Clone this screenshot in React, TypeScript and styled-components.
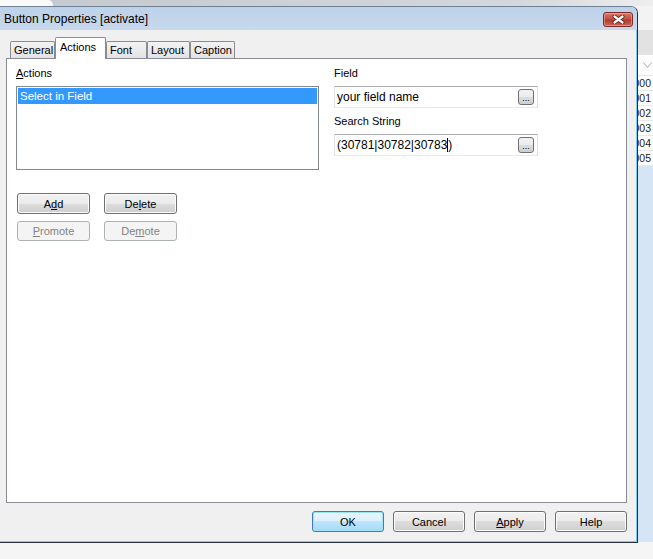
import styled, { createGlobalStyle } from 'styled-components';

const GlobalStyle = createGlobalStyle`
  html, body {
    margin: 0;
    padding: 0;
  }
  body {
    font-family: "Liberation Sans", Arial, sans-serif;
    font-size: 11px;
    color: #000;
    background: #f5f5f5;
  }
`;

const Desktop = styled.div`
  position: relative;
  width: 653px;
  height: 559px;
  overflow: hidden;
`;

/* the application window behind the dialog */
const BgApp = styled.div`
  display: flex;
  flex-direction: column;
  height: 100%;
`;

const TopStrip = styled.div`
  display: flex;
  height: 6px;
  background: linear-gradient(to right, #c3c8ce, #d4d8dc 80%, #eeeeee);
`;

const TopTab = styled.div`
  width: 53px;
  background: #fafafa;
  border-top-right-radius: 5px;
`;

const Toolbar = styled.div<{ $h: number; $bg: string }>`
  height: ${(p) => p.$h}px;
  background: ${(p) => p.$bg};
`;

const GridHeader = styled.div`
  display: flex;
  justify-content: flex-end;
  align-items: center;
  height: 21px;
  box-sizing: border-box;
  padding-right: 1px;
  background: #fdfdfd;
  border-bottom: 1px solid #e6e6e6;
`;

const GridRow = styled.div`
  display: flex;
  justify-content: flex-end;
  align-items: center;
  height: 15px;
  box-sizing: border-box;
  padding-right: 2px;
  background: #fff;
  border-bottom: 1px solid #e8e8e8;
  font-size: 10.5px;
  color: #222;
`;

const BlueArea = styled.div`
  flex: 1;
  background: #d6e5f5;
`;

const StatusBar = styled.div`
  height: 17px;
  background: #f5f5f5;
`;

/* dialog window */
const Dialog = styled.section`
  position: absolute;
  left: 0;
  top: 6px;
  width: 638px;
  height: 537px;
  box-sizing: border-box;
  display: flex;
  flex-direction: column;
  border: 1px solid #26323f;
  border-left: none;
  border-top-color: #6f8195;
  border-top-right-radius: 7px;
  background: #f0f0f0;
  box-shadow: inset -1px -1px 0 #84c8ea;
  overflow: hidden;
`;

const TitleBar = styled.header`
  display: flex;
  justify-content: space-between;
  align-items: flex-start;
  height: 23px;
  padding: 0 4px;
  background: linear-gradient(#bdd1e9, #c8d9ee);
`;

const Title = styled.h1`
  margin: 5px 0 0;
  font-size: 12px;
  font-weight: normal;
  line-height: 14px;
  color: #000;
`;

const CloseButton = styled.button`
  display: flex;
  align-items: center;
  justify-content: center;
  margin-top: 5px;
  width: 30px;
  height: 15px;
  padding: 0;
  border: 1px solid #7a2c25;
  border-radius: 3px;
  background: linear-gradient(#d77a6e, #c24f42 45%, #b23a2e 55%, #c9685a);
  box-shadow: inset 0 0 0 1px rgba(255, 200, 190, 0.45);
`;

const Body = styled.div`
  flex: 1;
  display: flex;
  flex-direction: column;
  padding: 7px 10px 0 6px;
`;

const TabStrip = styled.div`
  display: flex;
  align-items: flex-end;
  height: 22px;
  padding-left: 4px;
  position: relative;
  z-index: 1;
`;

const Tab = styled.div<{ $w: number; $active?: boolean }>`
  box-sizing: border-box;
  width: ${(p) => p.$w}px;
  height: ${(p) => (p.$active ? 22 : 17)}px;
  margin-bottom: ${(p) => (p.$active ? 0 : 1)}px;
  padding: ${(p) => (p.$active ? '3px 0 0 4px' : '2px 0 0 3px')};
  border: 1px solid #898c95;
  border-bottom: none;
  border-radius: 2px 2px 0 0;
  background: ${(p) => (p.$active ? '#fff' : 'linear-gradient(#f3f3f3, #e3e3e3)')};
  font-size: 11px;
  line-height: 13px;
  white-space: nowrap;
`;

const Panel = styled.div`
  flex: 1;
  margin-top: -1px;
  box-sizing: border-box;
  display: flex;
  align-items: flex-start;
  gap: 15px;
  padding: 8px 9px;
  border: 1px solid #898c95;
  background: #fff;
`;

const Column = styled.div<{ $w: number }>`
  display: flex;
  flex-direction: column;
  width: ${(p) => p.$w}px;
`;

const Label = styled.label`
  font-size: 11px;
  line-height: 13px;
  margin-bottom: 6px;
`;

const ListBox = styled.div`
  box-sizing: border-box;
  height: 84px;
  padding: 1px;
  border: 1px solid #828790;
  background: #fff;
`;

const ListItem = styled.div<{ $selected?: boolean }>`
  height: 16px;
  padding-left: 2px;
  font-size: 11.5px;
  line-height: 16px;
  color: ${(p) => (p.$selected ? '#fff' : '#000')};
  background: ${(p) => (p.$selected ? '#3399ff' : 'transparent')};
`;

const ButtonGrid = styled.div`
  display: grid;
  grid-template-columns: 73px 73px;
  grid-template-rows: 21px 20px;
  column-gap: 14px;
  row-gap: 7px;
  margin: 23px 0 0 1px;
`;

const Button = styled.button<{ $default?: boolean }>`
  box-sizing: border-box;
  width: 100%;
  height: 100%;
  padding: 0;
  font-family: "Liberation Sans", Arial, sans-serif;
  font-size: 11px;
  color: #000;
  border: 1px solid ${(p) => (p.$default ? '#3c7fb1' : '#707070')};
  border-radius: 3px;
  background: ${(p) =>
    p.$default
      ? 'linear-gradient(#eaf6fd, #d9f0fc 50%, #bee6fd 50%, #a7d9f5)'
      : 'linear-gradient(#f2f2f2, #ebebeb 50%, #dddddd 50%, #cfcfcf)'};
  box-shadow: inset 0 0 0 1px ${(p) => (p.$default ? '#9fe2f6' : '#fcfcfc')};

  &:disabled {
    color: #838383;
    border-color: #adb2b5;
    background: #f4f4f4;
    box-shadow: none;
  }
`;

const Field = styled.div`
  box-sizing: border-box;
  display: flex;
  align-items: center;
  height: 22px;
  padding: 0 3px 0 2px;
  border: 1px solid;
  border-color: #abadb3 #dbdfe6 #e3e9ef #e2e3ea;
  background: #fff;
  font-size: 12px;
`;

const FieldText = styled.span`
  flex: 1;
  white-space: nowrap;
  display: flex;
  align-items: center;
`;

const Caret = styled.span`
  display: inline-block;
  width: 1px;
  height: 14px;
  background: #000;
`;

const EllipsisButton = styled.button`
  box-sizing: border-box;
  width: 16px;
  height: 16px;
  padding: 0 0 2px;
  display: flex;
  align-items: flex-end;
  justify-content: center;
  border: 1px solid #707070;
  border-radius: 3px;
  background: linear-gradient(#f2f2f2, #ebebeb 50%, #dddddd 50%, #cfcfcf);
  font-family: "Liberation Sans", Arial, sans-serif;
  font-size: 9px;
  line-height: 8px;
  color: #000;
`;

const Gap = styled.div<{ $h: number }>`
  height: ${(p) => p.$h}px;
`;

const Footer = styled.footer`
  display: grid;
  grid-template-columns: repeat(4, 72px);
  grid-auto-rows: 21px;
  column-gap: 9px;
  justify-content: end;
  margin-top: 8px;
  padding-bottom: 10px;
`;

const rows = ['30000', '30001', '30002', '30003', '30004', '30005'];

const tabs = [
  { name: 'General', w: 45 },
  { name: 'Actions', w: 51, active: true },
  { name: 'Font', w: 41 },
  { name: 'Layout', w: 43 },
  { name: 'Caption', w: 45 },
];

export default function App() {
  return (
    <>
      <GlobalStyle />
      <Desktop>
        <BgApp>
          <TopStrip>
            <TopTab />
          </TopStrip>
          <Toolbar $h={24} $bg="#f3f3f3" />
          <Toolbar $h={25} $bg="#e2e2e2" />
          <GridHeader>
            <svg width="9" height="6" viewBox="0 0 9 6">
              <polyline points="0.5,0.5 4.5,5.5 8.5,0.5" fill="none" stroke="#a8a8a8" strokeWidth="1" />
            </svg>
          </GridHeader>
          {rows.map((r) => (
            <GridRow key={r}>{r}</GridRow>
          ))}
          <BlueArea />
          <StatusBar />
        </BgApp>

        <Dialog>
          <TitleBar>
            <Title>Button Properties [activate]</Title>
            <CloseButton aria-label="Close">
              <svg width="13" height="9" viewBox="0 0 13 9">
                <path d="M2.5 1.5 L10.5 7.5 M10.5 1.5 L2.5 7.5" stroke="#5a1e18" strokeWidth="4" strokeLinecap="round" />
                <path d="M2.5 1.5 L10.5 7.5 M10.5 1.5 L2.5 7.5" stroke="#fff" strokeWidth="2.2" strokeLinecap="round" />
              </svg>
            </CloseButton>
          </TitleBar>
          <Body>
            <TabStrip>
              {tabs.map((t) => (
                <Tab key={t.name} $w={t.w} $active={t.active}>
                  {t.name}
                </Tab>
              ))}
            </TabStrip>
            <Panel>
              <Column $w={303}>
                <Label>
                  <u>A</u>ctions
                </Label>
                <ListBox>
                  <ListItem $selected>Select in Field</ListItem>
                </ListBox>
                <ButtonGrid>
                  <Button>
                    A<u>d</u>d
                  </Button>
                  <Button>
                    De<u>l</u>ete
                  </Button>
                  <Button disabled>
                    <u>P</u>romote
                  </Button>
                  <Button disabled>
                    De<u>m</u>ote
                  </Button>
                </ButtonGrid>
              </Column>
              <Column $w={204}>
                <Label>Field</Label>
                <Field>
                  <FieldText>your field name</FieldText>
                  <EllipsisButton>...</EllipsisButton>
                </Field>
                <Gap $h={7} />
                <Label>Search String</Label>
                <Field>
                  <FieldText>
                    (30781|30782|30783
                    <Caret />)
                  </FieldText>
                  <EllipsisButton>...</EllipsisButton>
                </Field>
              </Column>
            </Panel>
            <Footer>
              <Button $default>OK</Button>
              <Button>Cancel</Button>
              <Button>
                <u>A</u>pply
              </Button>
              <Button>Help</Button>
            </Footer>
          </Body>
        </Dialog>
      </Desktop>
    </>
  );
}
